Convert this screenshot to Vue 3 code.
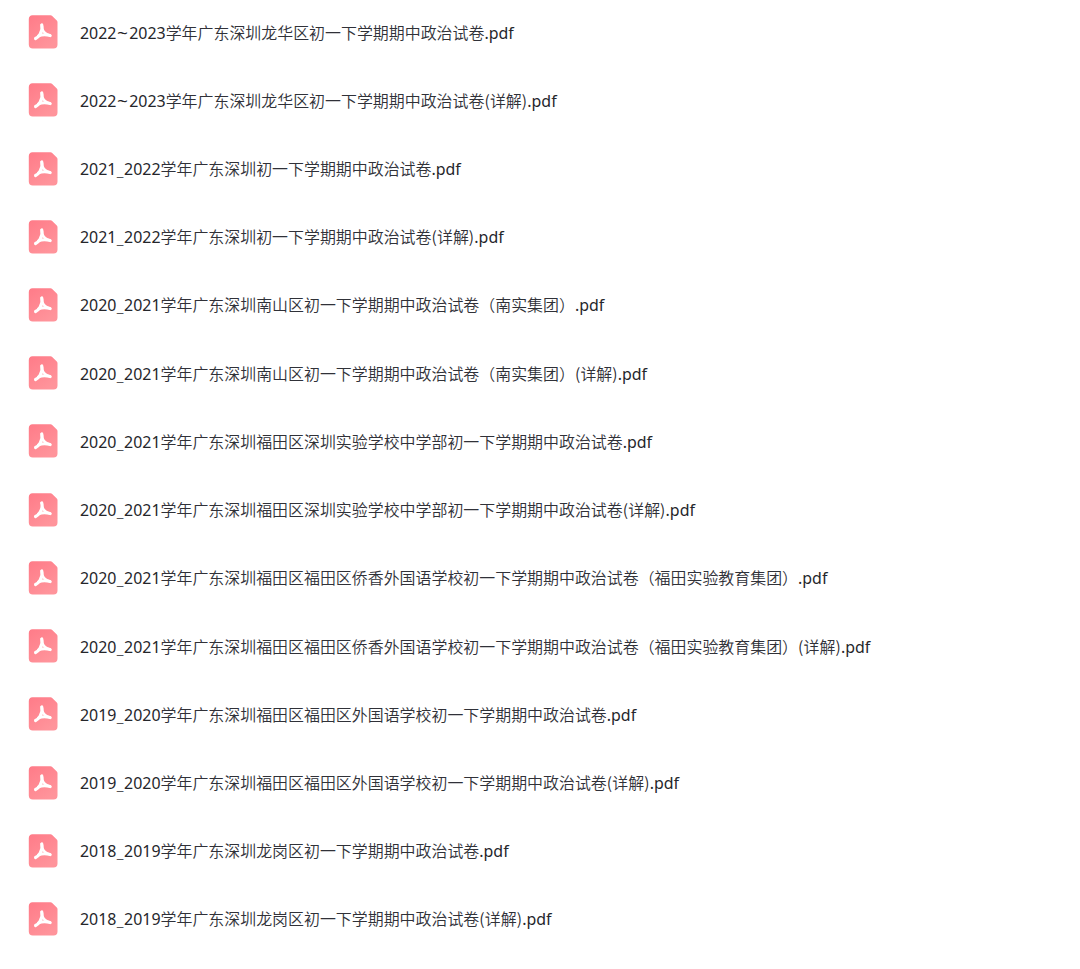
<script setup>
const names = [
    '2022~2023学年广东深圳龙华区初一下学期期中政治试卷.pdf',
    '2022~2023学年广东深圳龙华区初一下学期期中政治试卷(详解).pdf',
    '2021_2022学年广东深圳初一下学期期中政治试卷.pdf',
    '2021_2022学年广东深圳初一下学期期中政治试卷(详解).pdf',
    '2020_2021学年广东深圳南山区初一下学期期中政治试卷（南实集团）.pdf',
    '2020_2021学年广东深圳南山区初一下学期期中政治试卷（南实集团）(详解).pdf',
    '2020_2021学年广东深圳福田区深圳实验学校中学部初一下学期期中政治试卷.pdf',
    '2020_2021学年广东深圳福田区深圳实验学校中学部初一下学期期中政治试卷(详解).pdf',
    '2020_2021学年广东深圳福田区福田区侨香外国语学校初一下学期期中政治试卷（福田实验教育集团）.pdf',
    '2020_2021学年广东深圳福田区福田区侨香外国语学校初一下学期期中政治试卷（福田实验教育集团）(详解).pdf',
    '2019_2020学年广东深圳福田区福田区外国语学校初一下学期期中政治试卷.pdf',
    '2019_2020学年广东深圳福田区福田区外国语学校初一下学期期中政治试卷(详解).pdf',
    '2018_2019学年广东深圳龙岗区初一下学期期中政治试卷.pdf',
    '2018_2019学年广东深圳龙岗区初一下学期期中政治试卷(详解).pdf'
]

// Separa el nombre en tramos: cifras, signos, chino y extensión
const kindOf = (part) => {
    if (part === '~') return 'tilde'
    if (part === '_') return 'under'
    if (/^[()]$/.test(part)) return 'paren'
    return /^[\d.a-z]+$/.test(part) ? 'latin' : 'han'
}

const files = names.map(name => ({
    name,
    parts: name.match(/[~_()]|[\d.a-z]+|[^\d.a-z~_()]+/g).map(text => ({ text, kind: kindOf(text) }))
}))
</script>

<template>
    <ul class="file-list">
        <li v-for="file in files" :key="file.name" class="file-row">
            <svg class="pdf-icon" viewBox="0 0 30 34" aria-hidden="true">
                <defs>
                    <linearGradient id="pdf-fill" x1="0" y1="0" x2="0.6" y2="1">
                        <stop offset="0" stop-color="#ff7b88" />
                        <stop offset="1" stop-color="#ff949b" />
                    </linearGradient>
                </defs>
                <path fill="url(#pdf-fill)"
                    d="M4.500 0.300h18q1 0 1.700 0.700L28.800 5.600q0.700 0.700 0.700 1.700v22.200a4 4 0 0 1-4 4H4.800a4 4 0 0 1-4-4V4.300a4 4 0 0 1 3.700-4z" />
                <g fill="none" stroke="#fff" stroke-linecap="round" stroke-linejoin="round">
                    <path stroke-width="3.200" d="M13.700 10C14.600 13 14 16.200 12.200 19C10.600 21.500 9.200 22.800 7.600 23.500" />
                    <path stroke-width="2.500" d="M14.400 14.200C15.300 17 17.500 19.200 21.800 20.300" />
                    <path stroke-width="3" d="M10.600 21C13.500 19.600 17.500 19.300 22.300 20.600" />
                </g>
            </svg>
            <span class="file-name"><span v-for="(part, index) in file.parts" :key="index" :class="part.kind">{{ part.text }}</span></span>
        </li>
    </ul>
</template>

<style>
body {
    margin: 0;
    background: #fff;
}
</style>

<style scoped>
.file-list {
    list-style: none;
    margin: 0;
    padding: 0 0 0 28px;
    height: 969px;
    box-sizing: border-box;
    overflow: hidden;
}

.file-row {
    display: flex;
    align-items: center;
    gap: 22px;
    height: 68.23px;
}

.file-row:first-child {
    margin-top: -2px;
}

.pdf-icon {
    flex: none;
    width: 30px;
    height: 34px;
}

.file-name {
    font-family: "Noto Sans", "Noto Sans CJK SC", sans-serif;
    font-size: 15.95px;
    line-height: 24px;
    color: #25262b;
    white-space: nowrap;
}

.han {
    font-family: "Noto Sans CJK SC", sans-serif;
    font-weight: 350;
    color: #303138;
}

.tilde {
    display: inline-block;
    padding: 0 1.8px;
    transform: scaleX(1.2);
}

.under {
    display: inline-block;
    padding: 0 0.5px 0 0.4px;
    transform: translateY(1px);
    font-weight: 300;
}

.paren {
    font-family: "Noto Sans CJK SC", sans-serif;
    font-weight: 350;
    letter-spacing: 0.2px;
}
</style>
